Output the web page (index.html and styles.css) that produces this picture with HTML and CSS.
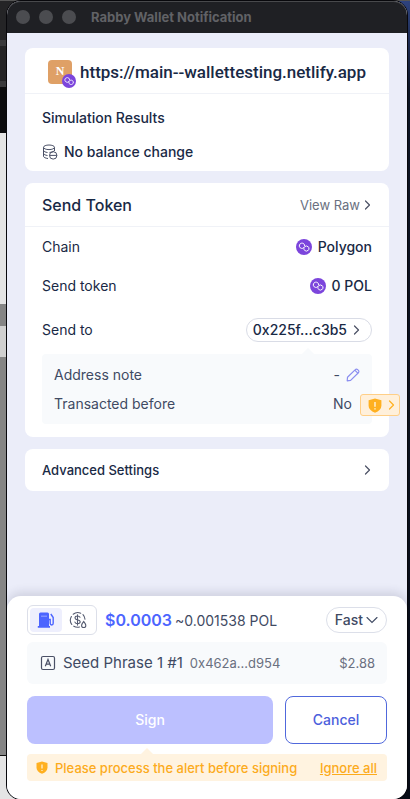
FILE: index.html
```html
<!DOCTYPE html>
<html lang="en">
<head>
<meta charset="utf-8">
<meta name="viewport" content="width=device-width, initial-scale=1">
<title>Rabby Wallet Notification</title>
<link rel="stylesheet" href="styles.css">
</head>
<body>
<svg class="defs" aria-hidden="true">
  <symbol id="polygon" viewBox="0 0 16 16">
    <circle cx="8" cy="8" r="8" fill="#7c45dc"/>
    <path d="M8.600 6.600V5.900a1 1 0 0 0-.5-.8l-1.600-.9a1 1 0 0 0-1 0l-1.600.9a1 1 0 0 0-.5.8v1.800a1 1 0 0 0 .5.8l1.600.9a1 1 0 0 0 1 0l3.400-2.300a1 1 0 0 1 1 0l1.500.9a1 1 0 0 1 .5.8v1.500a1 1 0 0 1-.5.8l-1.500.9a1 1 0 0 1-1 0l-1.500-.9a1 1 0 0 1-.5-.8V9.600" fill="none" stroke="#fff" stroke-width="1" stroke-linejoin="round" stroke-linecap="round"/>
  </symbol>
  <symbol id="chevron" viewBox="0 0 8 12">
    <path d="m1.500 2 4 4-4 4" fill="none" stroke="currentColor" stroke-width="1.200" stroke-linecap="round" stroke-linejoin="round"/>
  </symbol>
  <symbol id="shield" viewBox="0 0 14 15">
    <path d="M7 .4 13.400 2.300v5.400c0 3-2.400 5.500-6.400 7C3 13.200.6 10.700.6 7.700V2.300z" fill="#ffb020"/>
    <path d="M7 4v4.700M7 10.300v1.300" stroke="#fff3df" stroke-width="1.400"/>
  </symbol>
</svg>
<div class="window">
  <header class="titlebar">
    <span class="dot"></span><span class="dot"></span><span class="dot"></span>
    <h1>Rabby Wallet Notification</h1>
  </header>
  <main class="content">
    <section class="card">
      <div class="origin">
        <span class="site-icon">N<svg class="badge" aria-hidden="true"><use href="#polygon"/></svg></span>
        <span>https://main--wallettesting.netlify.app</span>
      </div>
      <div class="simulation">
        <h2>Simulation Results</h2>
        <p class="balance">
          <svg width="16" height="16" viewBox="0 0 16 16" fill="none" stroke="#4a5066" aria-hidden="true"><ellipse cx="7" cy="3.300" rx="5.500" ry="2.300"/><path d="M1.500 3.500v8.800c0 1 2 2 4.500 2.200M1.500 6.300c.2 1.200 2 2 4 2.200M1.500 9.300c.2 1.200 2 2 4 2.200M12.500 3.500V7M7.500 8.400c1.600 0 3.500-.5 4.500-1.400"/><circle cx="11.200" cy="11.400" r="3.700"/><path d="M7.500 11.400h7.400"/></svg>
          No balance change
        </p>
      </div>
    </section>
    <section class="card">
      <div class="card-head">
        <h2>Send Token</h2>
        <button class="raw">View Raw <svg class="chevron" aria-hidden="true"><use href="#chevron"/></svg></button>
      </div>
      <dl class="rows">
        <div class="row"><dt>Chain</dt><dd><svg class="coin" aria-hidden="true"><use href="#polygon"/></svg>Polygon</dd></div>
        <div class="row"><dt>Send token</dt><dd><svg class="coin" aria-hidden="true"><use href="#polygon"/></svg>0 POL</dd></div>
        <div class="row send-to"><dt>Send to</dt><dd><button class="address">0x225f...c3b5 <svg class="chevron" aria-hidden="true"><use href="#chevron"/></svg></button></dd></div>
      </dl>
      <dl class="details">
        <div class="detail"><dt>Address note</dt><dd>-
          <button class="edit" aria-label="Edit note"><svg width="14" height="14" viewBox="0 0 14 14" fill="none" stroke="#8a8df0" stroke-width="1.200" stroke-linejoin="round"><path d="m1.200 12.800.3-3.500 7.800-7.700a1.600 1.600 0 0 1 2.300 0l.8.8a1.600 1.600 0 0 1 0 2.300l-7.800 7.700zM8.800 2.200l3 3"/></svg></button></dd></div>
        <div class="detail"><dt>Transacted before</dt><dd class="before">No</dd>
          <dd class="alert-slot"><button class="alert" aria-label="View alert"><svg width="14" height="15" aria-hidden="true"><use href="#shield"/></svg><svg class="chevron" aria-hidden="true"><use href="#chevron"/></svg></button></dd></div>
      </dl>
    </section>
    <button class="card advanced">Advanced Settings <svg class="chevron" aria-hidden="true"><use href="#chevron"/></svg></button>
  </main>
  <footer class="footer">
    <div class="gas">
      <div class="gas-switch">
        <button class="active" aria-label="Pay gas with native token"><svg width="18" height="18" viewBox="0 0 18 18" aria-hidden="true"><path d="M2 3a1.500 1.500 0 0 1 1.500-1.500h7A1.500 1.500 0 0 1 12 3v12h1v1.700H.8V15H2z" fill="#4c65ff"/><path d="M4 5.200h6" stroke="#8d9dff" stroke-width="1.200"/><path d="M12 8.500h1.200v3.700c0 2.300 3 2.300 3 0V6.500L13.800 3" fill="none" stroke="#4c65ff" stroke-width="1.400"/></svg></button>
        <button aria-label="Pay gas with gas account"><svg width="18" height="18" viewBox="0 0 18 18" fill="none" stroke="#555b70" stroke-width="1.100" stroke-linecap="round" aria-hidden="true"><path d="M10.500 16a7.300 7.300 0 0 1-5.700-.8M2.800 13.500A7.300 7.300 0 0 1 2.400 5.500M4.200 3.200a7.300 7.300 0 0 1 7.500-1M14 3.700a7.300 7.300 0 0 1 2 4.500M11 6.300C10.500 5.300 9.700 5 8.500 5 7 5 6 5.800 6 6.900c0 2.700 5.200 1.200 5.200 3.900 0 1.100-1.100 1.900-2.600 1.900-1.300 0-2.300-.6-2.700-1.600M8.500 3.700v10.400M14.700 10.500c1.300 1.700 2.100 2.700 2.100 3.900a2.100 2.100 0 0 1-4.200 0c0-1.200.8-2.200 2.100-3.900z"/></svg></button>
      </div>
      <div class="cost">
        <strong class="usd">$0.0003</strong>
        <span class="native">~0.001538 POL</span>
      </div>
      <button class="speed">Fast <svg width="12" height="8" viewBox="0 0 12 8" fill="none" stroke="currentColor" stroke-width="1.100" stroke-linecap="round" aria-hidden="true"><path d="m1 1.500 5 5 5-5"/></svg></button>
    </div>
    <div class="account">
      <svg width="16" height="16" viewBox="0 0 16 16" fill="none" stroke="#4a5066" stroke-width="1.200" aria-hidden="true"><rect x="1.500" y="1.500" width="13" height="13" rx="1.500"/><path d="m5.300 11.300 2.700-6.800 2.700 6.800M6.200 9.200h3.600"/></svg>
      <span class="name">Seed Phrase 1 #1</span>
      <span class="short">0x462a...d954</span>
      <span class="total">$2.88</span>
    </div>
    <div class="actions">
      <button class="sign" disabled>Sign</button>
      <button class="cancel">Cancel</button>
    </div>
    <div class="warning">
      <svg width="12" height="13" viewBox="0 0 14 15" aria-hidden="true"><use href="#shield"/></svg>
      <span>Please process the alert before signing</span>
      <a href="#">Ignore all</a>
    </div>
  </footer>
</div>
</body>
</html>
```
FILE: styles.css
```css
* { box-sizing: border-box; }

body {
  margin: 0;
  padding: 1px 3px 0 7px;
  min-height: 100vh;
  display: flex;
  background:
    linear-gradient(#555, #555) 0 0 / 100% 1px no-repeat,
    linear-gradient(#242426 0 40px, #3a3a3c 40px 46px, #242426 46px 81px, #3a3a3c 81px 87px, #0c0c0e 87px 133px, #e4e4e4 133px 304px, #858585 304px 326px, #d0d0d0 326px 357px, #858585 357px 755px, #111 755px 756px, #e4e4e4 756px) 0 0 / 20px 100% no-repeat,
    linear-gradient(#2e437f, #0d1424 90px, #070b16);
  font-family: Inter, "Liberation Sans", sans-serif;
  font-size: 14px;
  line-height: 20px;
  color: #192945;
}

.defs { position: absolute; width: 0; height: 0; }
h1, h2, p, dl, dd { margin: 0; }
h2 { font-weight: 500; }
svg { flex: none; }

button {
  font: inherit;
  color: inherit;
  background: none;
  border: 0;
  padding: 0;
  cursor: pointer;
}

.window {
  flex: 1;
  min-width: 0;
  display: flex;
  flex-direction: column;
  border-radius: 14px;
  overflow: hidden;
  background: #ebedf9;
  box-shadow: 0 0 0 1px #08080c;
}

.titlebar {
  display: flex;
  align-items: center;
  gap: 9px;
  height: 32px;
  padding: 0 9px;
  background: #1f2024;
  box-shadow: inset 0 1px #48494c;
  border-radius: 14px 14px 0 0;
}
.titlebar h1 {
  margin-left: 6px;
  font-size: 13px;
  font-weight: 700;
  color: #616266;
}
.dot { width: 14px; height: 14px; border-radius: 50%; background: #4b4c50; }

.content {
  flex: 1;
  display: flex;
  flex-direction: column;
  gap: 12px;
  padding: 15px 18px;
}
.card { background: #fff; border-radius: 8px; }

.origin {
  display: flex;
  align-items: center;
  justify-content: center;
  gap: 8px;
  height: 46px;
  padding-top: 2px;
  border-bottom: 1px solid #f0f2f7;
  font-family: Roboto, Inter, sans-serif;
  font-size: 17px;
  font-weight: 500;
}
.site-icon {
  position: relative;
  width: 24px;
  height: 24px;
  border-radius: 4px;
  background: #dfa066;
  color: #fff;
  font: 700 12px/22px "Liberation Serif", serif;
  text-align: center;
}
.badge { position: absolute; right: -4px; bottom: -4px; width: 14px; height: 14px; }

.simulation { padding: 14px 17px 9px; }
.simulation h2 { font-size: 14px; }
.balance {
  display: flex;
  align-items: center;
  gap: 6px;
  margin-top: 14px;
  font-weight: 500;
}

.card-head {
  display: flex;
  align-items: center;
  justify-content: space-between;
  height: 44px;
  padding: 0 17px;
  border-bottom: 1px solid #f0f2f7;
}
.card-head h2 { font-size: 16px; }
.raw { display: flex; align-items: center; gap: 4px; font-size: 13px; color: #6a7080; }
.chevron { width: 8px; height: 12px; color: #4a5064; }

.rows { padding: 0 17px; }
.row { display: flex; align-items: center; justify-content: space-between; height: 39px; }
.row dd { display: flex; align-items: center; gap: 6px; font-weight: 500; }
.send-to { height: 49px; }
.coin { width: 16px; height: 16px; }
.address {
  display: flex;
  align-items: center;
  gap: 6px;
  height: 24px;
  padding: 0 10px 0 6px;
  border: 1px solid #d9dce6;
  border-radius: 12px;
}

.details {
  position: relative;
  margin: 0 17px 13px;
  padding: 6px 12px;
  background: #f8fafc;
  border-radius: 4px;
  color: #3f4a63;
}
.details::before, .warning::before {
  content: "";
  position: absolute;
  bottom: 100%;
  border: 6px solid transparent;
  border-top: 0;
  border-bottom-color: #f8fafc;
}
.details::before { right: 58px; }
.detail { position: relative; display: flex; align-items: center; justify-content: space-between; height: 29px; }
.detail dd { display: flex; align-items: center; gap: 6px; }
.edit { display: flex; }
.detail .before { margin-right: 8px; }
.detail .alert-slot { position: absolute; right: -40px; top: 5px; }
.alert {
  display: flex;
  align-items: center;
  gap: 6px;
  width: 40px;
  height: 22px;
  padding: 0 5px 0 7px;
  border: 1px solid #ffcf87;
  border-radius: 3px;
  background: #fff0db;
}
.alert .chevron { color: #ffb020; }

.advanced {
  display: flex;
  align-items: center;
  justify-content: space-between;
  height: 42px;
  padding: 0 17px;
  font-size: 13px;
  font-weight: 500;
}

.footer {
  padding: 9px 20px 18px;
  background: #fff;
  border-radius: 14px 14px 0 0;
  box-shadow: 0 -4px 10px rgba(40, 44, 80, .14);
}
.gas { display: flex; align-items: center; height: 30px; }
.gas-switch {
  display: flex;
  padding: 2px;
  border: 1px solid #dcdfe9;
  border-radius: 6px;
}
.gas-switch button {
  display: flex;
  align-items: center;
  justify-content: center;
  width: 32px;
  height: 24px;
  border-radius: 4px;
}
.gas-switch .active { background: #eeeffd; }
.cost { display: flex; align-items: baseline; gap: 3px; margin-left: 8px; color: #3f4a63; }
.usd { font-size: 16px; font-weight: 600; color: #4c65ff; }
.speed {
  display: flex;
  align-items: center;
  gap: 3px;
  height: 26px;
  margin-left: auto;
  padding: 0 8px;
  border: 1px solid #dcdfe9;
  border-radius: 13px;
  font-weight: 500;
  color: #3f4a63;
}

.account {
  display: flex;
  align-items: center;
  height: 42px;
  margin-top: 7px;
  padding: 0 12px 0 13px;
  background: #f8fafc;
  border-radius: 6px;
  color: #6a7080;
  font-size: 13px;
}
.name { margin-left: 7px; font-size: 15px; color: #3f4a63; }
.short { margin-left: 7px; }
.total { margin-left: auto; }

.actions { display: flex; gap: 12px; margin-top: 12px; }
.actions button { height: 48px; border-radius: 8px; font-weight: 500; }
.sign { flex: 1; background: #bcc0ff; color: #fff; }
.cancel { width: 102px; border: 1px solid #5068dc; color: #4c60dc; }

.warning {
  position: relative;
  display: flex;
  align-items: center;
  gap: 7px;
  height: 27px;
  margin-top: 10px;
  padding: 0 10px 0 9px;
  background: #fff3e0;
  border-radius: 4px;
  font-size: 13px;
  font-weight: 500;
  color: #fcab1c;
}
.warning::before { left: 114px; border-bottom-color: #fff3e0; }
.warning a { margin-left: auto; color: inherit; }
```
